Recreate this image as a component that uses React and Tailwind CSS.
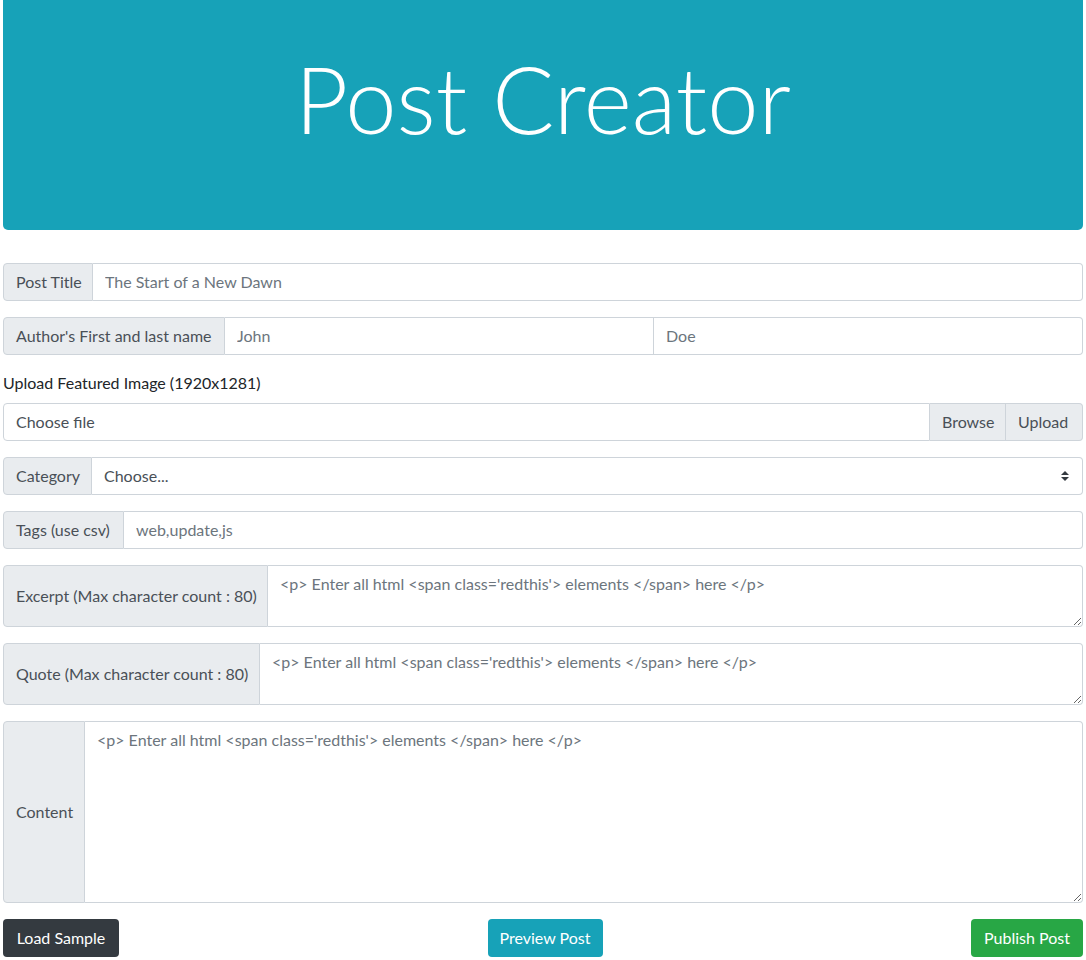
import React from "react";

function Addon({ width, children, className = "" }) {
  return (
    <div
      className={`flex items-center shrink-0 px-3 whitespace-nowrap bg-[#e9ecef] border border-[#ced4da] text-[#495057] ${width} ${className}`}
    >
      {children}
    </div>
  );
}

function TextRow({ label, width, placeholder }) {
  return (
    <div className="flex h-[38px] mb-4">
      <Addon width={width} className="rounded-l">
        {label}
      </Addon>
      <input
        className="flex-1 min-w-0 px-3 border border-l-0 border-[#ced4da] rounded-r bg-white text-[#495057] placeholder:text-[#6c757d] outline-none"
        placeholder={placeholder}
      />
    </div>
  );
}

function AreaRow({ label, width, rows, height }) {
  return (
    <div className={`flex mb-4 ${height}`}>
      <Addon width={width} className="rounded-l">
        {label}
      </Addon>
      <textarea
        rows={rows}
        className="flex-1 min-w-0 px-3 py-1.5 leading-6 border border-l-0 border-[#ced4da] rounded-r bg-white text-[#495057] placeholder:text-[#6c757d] outline-none resize-y"
        placeholder="<p> Enter all html <span class='redthis'> elements </span> here </p>"
      />
    </div>
  );
}

export default function App() {
  return (
    <div className="min-h-screen bg-white px-[3px] text-base font-['Lato','Liberation_Sans',sans-serif] text-[#212529]">
      <div className="h-[230px] mb-[33px] rounded-b-[5px] bg-[#17a2b8] flex items-center justify-center">
        <h1 className="text-white text-[92px] font-light leading-none pb-[32px]">
          Post Creator
        </h1>
      </div>

      <TextRow label="Post Title" width="w-[90px]" placeholder="The Start of a New Dawn" />

      <div className="flex h-[38px] mb-4">
        <Addon width="w-[222px]" className="rounded-l">
          Author's First and last name
        </Addon>
        <input
          className="flex-1 min-w-0 px-3 border border-l-0 border-[#ced4da] bg-white placeholder:text-[#6c757d] outline-none"
          placeholder="John"
        />
        <input
          className="flex-1 min-w-0 px-3 border border-l-0 border-[#ced4da] rounded-r bg-white placeholder:text-[#6c757d] outline-none"
          placeholder="Doe"
        />
      </div>

      <div className="mb-2 leading-6">Upload Featured Image (1920x1281)</div>
      <div className="flex h-[38px] mb-4">
        <div className="flex-1 flex items-center px-3 border border-[#ced4da] rounded-l bg-white text-[#495057]">
          Choose file
        </div>
        <Addon width="w-[76px]" className="border-l-0">
          Browse
        </Addon>
        <Addon width="w-[77px]" className="border-l-0 rounded-r">
          Upload
        </Addon>
      </div>

      <div className="flex h-[38px] mb-4">
        <Addon width="w-[89px]" className="rounded-l">
          Category
        </Addon>
        <div className="flex-1 flex items-center justify-between px-3 border border-l-0 border-[#ced4da] rounded-r bg-white text-[#495057]">
          <span>Choose...</span>
          <svg width="8" height="10" viewBox="0 0 4 5" className="mr-[1px]">
            <path d="M2 0L0 2h4zm0 5L0 3h4z" fill="#343a40" />
          </svg>
        </div>
      </div>

      <TextRow label="Tags (use csv)" width="w-[121px]" placeholder="web,update,js" />

      <AreaRow label="Excerpt (Max character count : 80)" width="w-[265px]" rows={2} height="h-[62px]" />
      <AreaRow label="Quote (Max character count : 80)" width="w-[257px]" rows={2} height="h-[62px]" />
      <AreaRow label="Content" width="w-[82px]" rows={7} height="h-[182px]" />

      <div className="flex justify-between items-center">
        <button className="w-[116px] h-[38px] rounded bg-[#343a40] text-white">
          Load Sample
        </button>
        <button className="w-[115px] h-[38px] rounded bg-[#17a2b8] text-white">
          Preview Post
        </button>
        <button className="w-[112px] h-[38px] rounded bg-[#28a745] text-white">
          Publish Post
        </button>
      </div>
    </div>
  );
}
